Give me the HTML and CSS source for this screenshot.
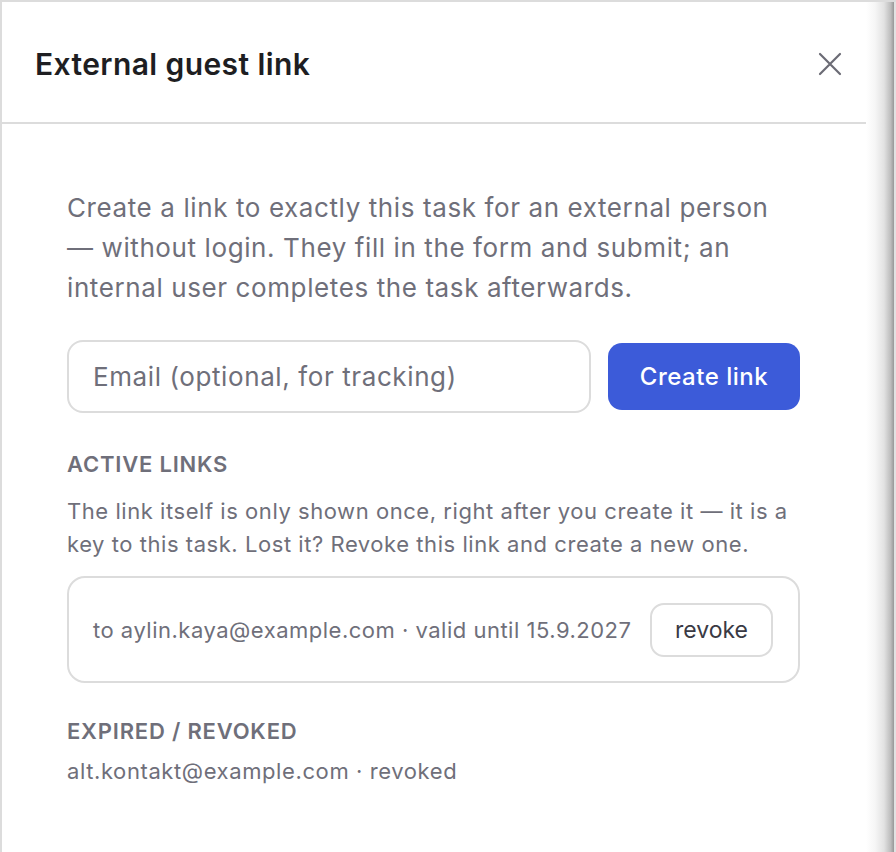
FILE: index.html
```html
<!DOCTYPE html>
<html lang="en">
<head>
<meta charset="utf-8">
<title>External guest link</title>
<link rel="stylesheet" href="styles.css">
</head>
<body>
<div class="frame">
  <section class="panel">
    <header class="panel-header">
      <h1 class="panel-title">External guest link</h1>
      <button class="close-btn" aria-label="Close">
        <svg viewBox="0 0 24 24" width="24" height="24"><path d="M2 2 L22 22 M22 2 L2 22" stroke="#6b6b75" stroke-width="2.2" stroke-linecap="round" fill="none"/></svg>
      </button>
    </header>
    <div class="panel-body">
      <p class="intro">Create a link to exactly this task for an external person — without login. They fill in the form and submit; an internal user completes the task afterwards.</p>
      <div class="create-row">
        <input class="email-input" type="text" placeholder="Email (optional, for tracking)">
        <button class="primary-btn">Create link</button>
      </div>
      <h2 class="section-label active-label">Active links</h2>
      <p class="note">The link itself is only shown once, right after you create it — it is a key to this task. Lost it? Revoke this link and create a new one.</p>
      <div class="link-card">
        <span class="link-text">to aylin.kaya@example.com · valid until 15.9.2027</span>
        <button class="revoke-btn">revoke</button>
      </div>
      <h2 class="section-label expired-label">Expired / revoked</h2>
      <p class="expired-item">alt.kontakt@example.com · revoked</p>
    </div>
  </section>
  <div class="edge"></div>
</div>
</body>
</html>
```

FILE: styles.css
```css
* { box-sizing: border-box; }
html, body { margin: 0; padding: 0; background: #fff; }
body {
  font-family: Inter, "Liberation Sans", sans-serif;
  color: #6f6f7a;
  overflow: hidden;
}
.frame {
  display: flex;
  height: 852px;
  border-top: 2px solid #dcdcdc;
}
.panel {
  flex: 1;
  border-left: 2px solid #dcdcdc;
  background: #fff;
}
.edge {
  width: 30px;
  background: linear-gradient(to right, #ffffff 0%, #f6f6f6 30%, #e2e2e2 60%, #bdbdbd 82%, #9c9c9c 92%, #e2e2e2 93%, #e2e2e2 100%);
}
.panel-header {
  height: 122px;
  display: flex;
  align-items: center;
  justify-content: space-between;
  padding: 3px 24px 0 33px;
  border-bottom: 2px solid #dcdcdc;
}
.panel-title {
  margin: 0;
  font-size: 30px;
  font-weight: 600;
  color: #1e1e22;
  letter-spacing: 0.4px;
}
.close-btn {
  border: 0;
  background: none;
  padding: 0;
  width: 24px;
  height: 24px;
  display: flex;
}
.panel-body {
  padding: 64px 66px 0 65px;
}
.intro {
  margin: 0;
  font-size: 26px;
  line-height: 40px;
  letter-spacing: 0.6px;
}
.create-row {
  display: flex;
  align-items: center;
  gap: 17px;
  margin-top: 32px;
}
.email-input {
  flex: 1;
  min-width: 0;
  height: 73px;
  border: 2px solid #dcdcdc;
  border-radius: 16px;
  padding: 0 24px;
  font-family: inherit;
  font-size: 26px;
  letter-spacing: 0.6px;
  color: #333;
  outline: none;
}
.email-input::placeholder { color: #6f6f7a; }
.primary-btn {
  width: 192px;
  height: 67px;
  border: 0;
  border-radius: 14px;
  background: #3c5bd9;
  color: #fff;
  font-family: inherit;
  font-size: 24px;
  font-weight: 500;
  letter-spacing: 0.5px;
}
.section-label {
  margin: 0;
  font-size: 22px;
  line-height: 30px;
  font-weight: 600;
  text-transform: uppercase;
  letter-spacing: 0.8px;
  color: #6f6f7a;
}
.active-label { margin-top: 36px; }
.note {
  margin: 16px 0 0;
  font-size: 22px;
  line-height: 33px;
  letter-spacing: 0.55px;
}
.link-card {
  margin-top: 15px;
  height: 107px;
  border: 2px solid #dcdcdc;
  border-radius: 18px;
  display: flex;
  align-items: center;
  justify-content: space-between;
  padding: 0 25px 0 24px;
}
.link-text {
  font-size: 22px;
  letter-spacing: 0.5px;
}
.revoke-btn {
  height: 54px;
  padding: 0 23px;
  border: 2px solid #dcdcdc;
  border-radius: 14px;
  background: #fff;
  color: #3a3a44;
  font-family: inherit;
  font-size: 23px;
}
.expired-label { margin-top: 33px; }
.expired-item {
  margin: 9px 0 0;
  font-size: 22px;
  line-height: 33px;
  letter-spacing: 0.6px;
}
```
